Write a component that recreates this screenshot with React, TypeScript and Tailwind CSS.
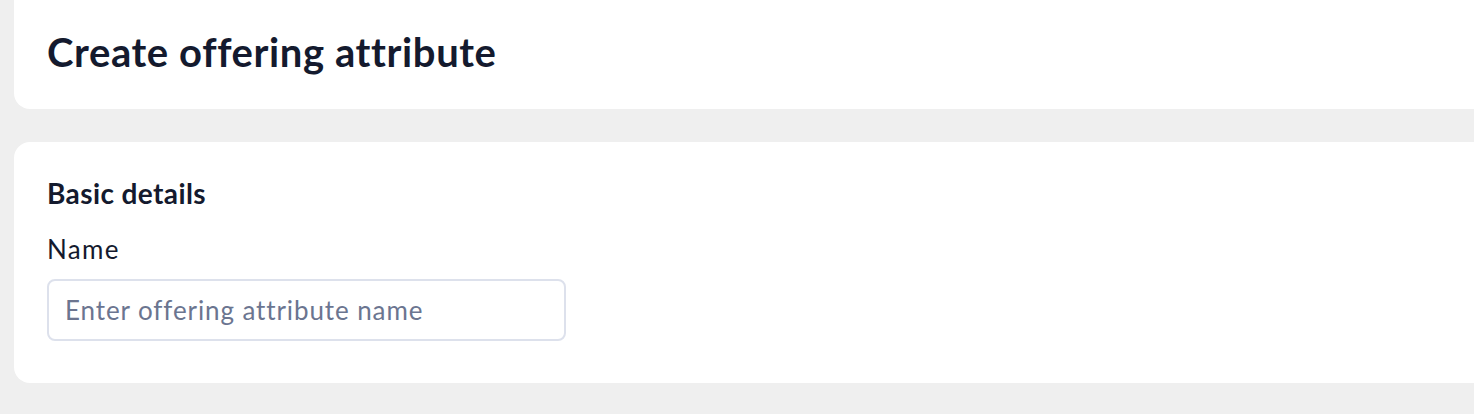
import React from "react";

export default function App() {
  return (
    <div
      className="w-[1474px] h-[414px] overflow-hidden bg-[#efefef] pl-[14px]"
      style={{ fontFamily: "Lato, 'Noto Sans', sans-serif" }}
    >
      <div className="mr-[-24px] h-[109px] rounded-b-2xl bg-white pl-[33px] pt-[28px]">
        <h1 className="text-[40px] font-bold tracking-[0.6px] text-[#141a2e] leading-[48px]">
          Create offering attribute
        </h1>
      </div>
      <div className="mt-[33px] mr-[-24px] h-[241px] rounded-2xl bg-white pl-[33px] pt-[34px]">
        <h2 className="text-[28px] font-bold tracking-[0.4px] text-[#141a2e] leading-[34px]">Basic details</h2>
        <div className="mt-[24px] text-[26px] tracking-[1.3px] text-[#141a2e] leading-[30px]">Name</div>
        <input
          className="mt-[15px] block w-[519px] h-[62px] rounded-lg border-2 border-[#dde1ec] bg-white px-[16px] text-[26px] tracking-[0.9px] text-[#141a2e] placeholder:text-[#6b7590] outline-none"
          placeholder="Enter offering attribute name"
        />
      </div>
    </div>
  );
}
